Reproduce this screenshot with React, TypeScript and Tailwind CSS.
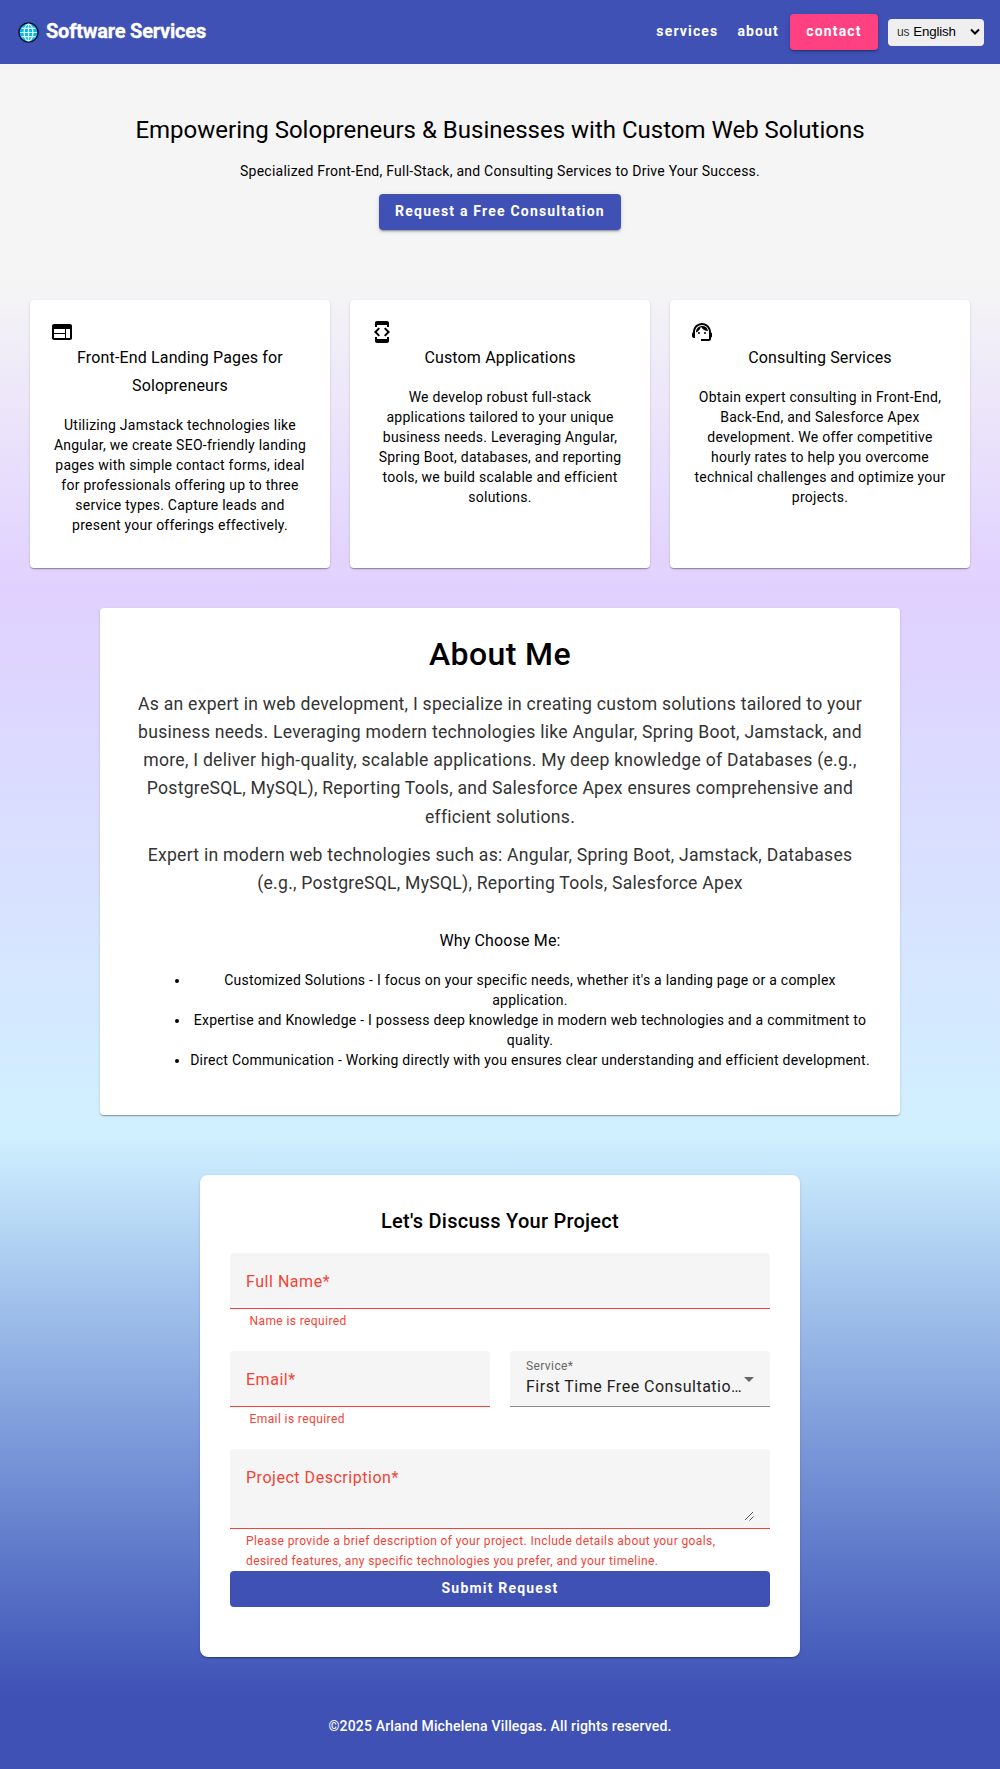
import React from "react";
import { MdWeb, MdDeveloperMode, MdOutlineSupportAgent } from "react-icons/md";

const services = [
  {
    icon: MdWeb,
    title: ["Front-End Landing Pages for", "Solopreneurs"],
    text: [
      "Utilizing Jamstack technologies like",
      "Angular, we create SEO-friendly landing",
      "pages with simple contact forms, ideal",
      "for professionals offering up to three",
      "service types. Capture leads and",
      "present your offerings effectively.",
    ],
  },
  {
    icon: MdDeveloperMode,
    title: ["Custom Applications"],
    text: [
      "We develop robust full-stack",
      "applications tailored to your unique",
      "business needs. Leveraging Angular,",
      "Spring Boot, databases, and reporting",
      "tools, we build scalable and efficient",
      "solutions.",
    ],
  },
  {
    icon: MdOutlineSupportAgent,
    title: ["Consulting Services"],
    text: [
      "Obtain expert consulting in Front-End,",
      "Back-End, and Salesforce Apex",
      "development. We offer competitive",
      "hourly rates to help you overcome",
      "technical challenges and optimize your",
      "projects.",
    ],
  },
];

const aboutLines = [
  "As an expert in web development, I specialize in creating custom solutions tailored to your",
  "business needs. Leveraging modern technologies like Angular, Spring Boot, Jamstack, and",
  "more, I deliver high-quality, scalable applications. My deep knowledge of Databases (e.g.,",
  "PostgreSQL, MySQL), Reporting Tools, and Salesforce Apex ensures comprehensive and",
  "efficient solutions.",
];

const expertLines = [
  "Expert in modern web technologies such as: Angular, Spring Boot, Jamstack, Databases",
  "(e.g., PostgreSQL, MySQL), Reporting Tools, Salesforce Apex",
];

const reasons = [
  ["Customized Solutions - I focus on your specific needs, whether it's a landing page or a complex", "application."],
  ["Expertise and Knowledge - I possess deep knowledge in modern web technologies and a commitment to", "quality."],
  ["Direct Communication - Working directly with you ensures clear understanding and efficient development."],
];

function Lines({ lines }: { lines: string[] }) {
  return (
    <>
      {lines.map((line) => (
        <span key={line} className="block whitespace-nowrap">
          {line}
        </span>
      ))}
    </>
  );
}

function Globe() {
  return (
    <svg viewBox="0 0 21 21" className="size-[21px]" fill="none">
      <circle cx="10.5" cy="10.5" r="9.6" fill="#00b7f0" stroke="#0a0f1c" strokeWidth="1.4" />
      <g stroke="#e8faff" strokeWidth="1.2">
        <path d="M10.5 2v17M2 10.5h17M3.5 6.3h14M3.5 14.7h14" />
        <ellipse cx="10.5" cy="10.5" rx="4.4" ry="8.4" />
      </g>
    </svg>
  );
}

const elevation =
  "shadow-[0_2px_1px_-1px_rgba(0,0,0,0.2),0_1px_1px_0_rgba(0,0,0,0.14),0_1px_3px_0_rgba(0,0,0,0.12)]";
const raised =
  "shadow-[0_3px_1px_-2px_rgba(0,0,0,0.2),0_2px_2px_0_rgba(0,0,0,0.14),0_1px_5px_0_rgba(0,0,0,0.12)]";

function Header() {
  return (
    <header className="flex h-16 items-center bg-[#3f51b5] pr-4 pl-[18px] text-white">
      <Globe />
      <h1 className="ml-[7px] pb-[2px] text-[20px] leading-8 font-bold tracking-[-0.2px] [-webkit-text-stroke:0.3px_white]">
        Software Services
      </h1>
      <nav className="ml-auto flex items-center text-[14px] font-bold tracking-[1.15px]">
        <a className="px-2 pb-[2px]">services</a>
        <a className="ml-[3px] px-2 pb-[2px]">about</a>
        <a className={"ml-[3px] flex h-9 w-[88px] items-center justify-center rounded bg-[#ff4081] pb-[2px] " + raised}>
          contact
        </a>
      </nav>
      <div className="ml-[10px] flex h-[27px] w-24 items-center rounded bg-[#efefef] pl-[9px] font-['Liberation_Sans'] text-[13.33px] tracking-[-0.2px] text-black">
        <span className="mr-1 text-[12px] text-[#333]">us</span>
        English
        <svg viewBox="0 0 10 8" className="ml-auto mr-1 h-2 w-[10px]" fill="none" stroke="black" strokeWidth="2">
          <path d="M1 1.5l4 4 4-4" />
        </svg>
      </div>
    </header>
  );
}

function Field({ label }: { label: string }) {
  return (
    <div className="flex h-14 items-center rounded-t border-b border-[#f44336] bg-[#f5f5f5] px-4 pt-[3px] text-base tracking-[0.53px] text-[#f44336]">
      {label}
    </div>
  );
}

export default function App() {
  return (
    <div className="flex h-[1769px] w-[1000px] flex-col font-[Roboto,sans-serif] text-[14px] leading-5 tracking-[0.25px] text-black">
      <Header />

      <section className="flex h-[216px] flex-col items-center bg-[#f5f5f5] pt-[50px]">
        <h2 className="text-2xl leading-8 tracking-normal">
          Empowering Solopreneurs &amp; Businesses with Custom Web Solutions
        </h2>
        <p className="mt-[15px]">
          Specialized Front-End, Full-Stack, and Consulting Services to Drive Your Success.
        </p>
        <button
          className={
            "mt-[13px] h-9 w-[242px] rounded bg-[#3f51b5] pb-[2px] font-bold tracking-[1.2px] text-white " + raised
          }
        >
          Request a Free Consultation
        </button>
      </section>

      <section className="flex h-[308px] items-start gap-5 bg-linear-to-b from-[#f5f5f5] to-[#e0d0ff] px-[30px] pt-5">
        {services.map(({ icon: Icon, title, text }) => (
          <article key={title[0]} className={"h-[268px] flex-1 rounded bg-white px-5 pt-5 text-center " + elevation}>
            <Icon className="size-6" />
            <h3 className="text-base leading-7 tracking-[0.15px]">
              <Lines lines={title} />
            </h3>
            <p className="mt-[15px]">
              <Lines lines={text} />
            </p>
          </article>
        ))}
      </section>

      <section className="flex h-[547px] justify-center bg-linear-to-b from-[#e0d0ff] to-[#d0f0ff] pt-5">
        <div className={"h-[507px] w-[800px] rounded bg-white pt-[26px] text-center " + elevation}>
          <h2 className="text-[32px] leading-10 font-medium tracking-[0.4px]">About Me</h2>
          <div className="mt-4 text-[17.6px] leading-[28.16px] text-[#333]">
            <p>
              <Lines lines={aboutLines} />
            </p>
            <p className="mt-[10px]">
              <Lines lines={expertLines} />
            </p>
          </div>
          <h3 className="mt-[30px] text-base leading-7 tracking-[0.15px]">Why Choose Me:</h3>
          <ul className="mt-[15px] mr-[30px] ml-[90px] list-disc">
            {reasons.map((lines) => (
              <li key={lines[0]}>
                {lines.map((line, i) => (
                  <React.Fragment key={line}>
                    {i > 0 && <br />}
                    <span className="whitespace-nowrap">{line}</span>
                  </React.Fragment>
                ))}
              </li>
            ))}
          </ul>
        </div>
      </section>

      <section className="flex h-[562px] justify-center bg-linear-to-b from-[#d0f0ff] to-[#3f51b5] pt-10">
        <form className={"h-[482px] w-[600px] rounded-lg bg-white px-[30px] pt-[30px] " + elevation}>
          <h2 className="text-center text-xl leading-8 font-medium tracking-[0.25px]">Let's Discuss Your Project</h2>
          <div className="mt-4">
            <Field label="Full Name*" />
            <p className="mt-[2px] pl-[19.5px] text-xs leading-5 tracking-[0.4px] text-[#f44336]">Name is required</p>
          </div>
          <div className="mt-5 grid grid-cols-2 gap-5">
            <div>
              <Field label="Email*" />
              <p className="mt-[2px] pl-[19.5px] text-xs leading-5 tracking-[0.4px] text-[#f44336]">Email is required</p>
            </div>
            <div className="flex h-14 items-center rounded-t border-b border-[#8c8c8c] bg-[#f5f5f5] pr-4 pl-4">
              <div className="w-[218px]">
                <div className="text-xs leading-4 tracking-[0.4px] text-[#666]">Service*</div>
                <div className="mt-px text-base leading-6 tracking-[0.5px] whitespace-nowrap text-[#212121]">
                  First Time Free Consultatio…
                </div>
              </div>
              <svg viewBox="0 0 10 5" className="mt-[2px] h-[5px] w-[10px] shrink-0" fill="#666">
                <path d="M0 0h10L5 5z" />
              </svg>
            </div>
          </div>
          <div className="mt-5 flex h-20 justify-between rounded-t border-b border-[#f44336] bg-[#f5f5f5] px-4 pt-[17px] pb-[7px] text-base leading-6 tracking-[0.53px] text-[#f44336]">
            Project Description*
            <svg viewBox="0 0 10 10" className="size-[10px] self-end" stroke="#555" strokeWidth="1">
              <path d="M1 9l8-8M5.5 9.5l4-4" />
            </svg>
          </div>
          <p className="mt-[2px] pl-4 text-xs leading-5 tracking-[0.4px] text-[#f44336]">
            <Lines
              lines={[
                "Please provide a brief description of your project. Include details about your goals,",
                "desired features, any specific technologies you prefer, and your timeline.",
              ]}
            />
          </p>
          <button
            type="button"
            className="block h-9 w-full rounded bg-[#3f51b5] pb-[2px] font-bold tracking-[1.2px] text-white"
          >
            Submit Request
          </button>
        </form>
      </section>

      <footer className="flex flex-1 justify-center bg-[#3f51b5] pt-[19px] font-medium tracking-[0.17px] text-white">
        ©2025 Arland Michelena Villegas. All rights reserved.
      </footer>
    </div>
  );
}
